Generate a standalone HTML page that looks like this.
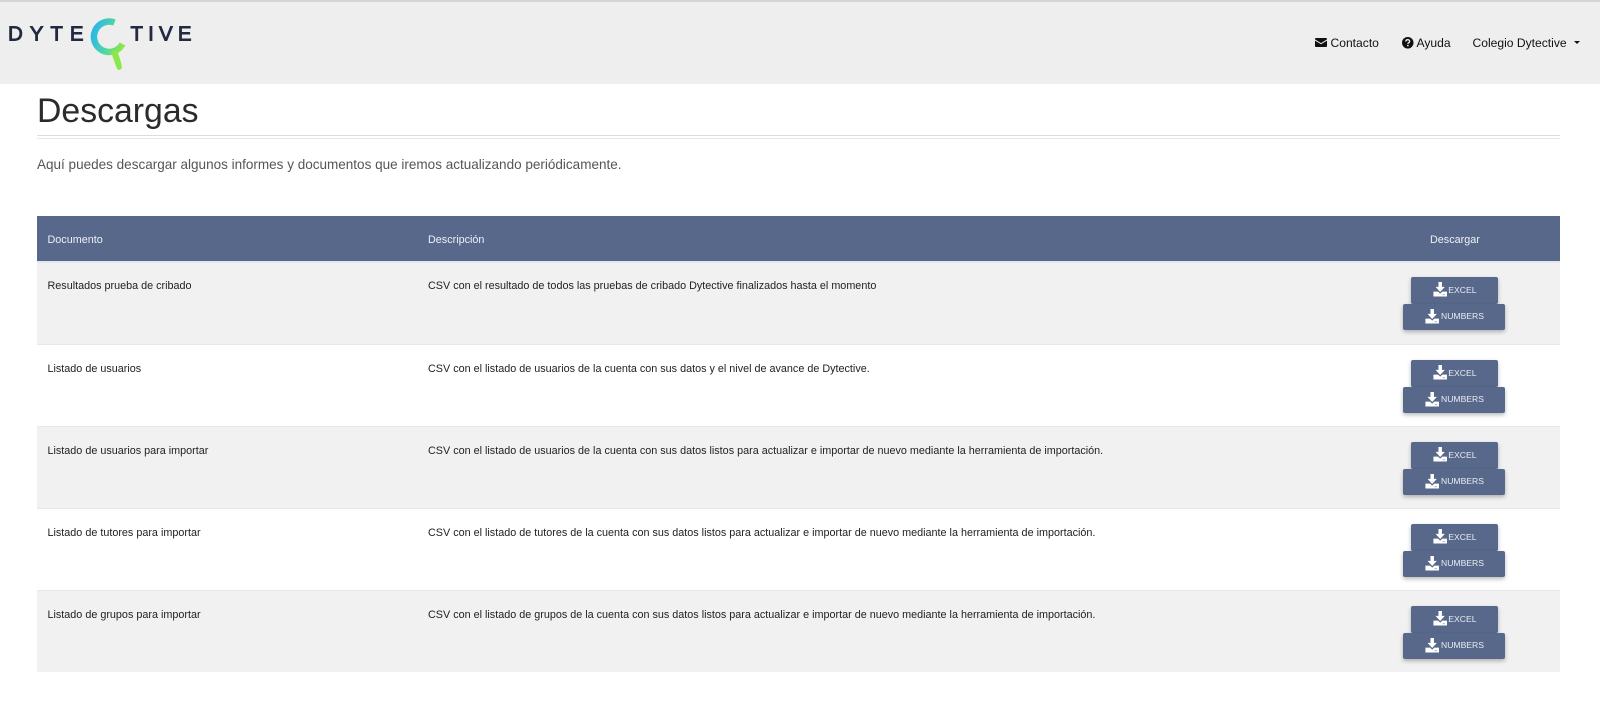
<!DOCTYPE html>
<html lang="es">
<head>
<meta charset="utf-8">
<title>Descargas</title>
<style>
*{box-sizing:border-box}
html,body{margin:0;padding:0;width:1600px;height:712px;overflow:hidden;background:#fff;font-family:"Liberation Sans",sans-serif;color:#212529}
#w{position:absolute;left:0;top:0;width:1600px;height:712px;filter:blur(.35px)}
.a{position:absolute;white-space:nowrap}
#nav{left:0;top:0;width:1600px;height:84px;background:#eee;border-top:2px solid #d4d4d4}
.nl{font-size:12.1px;line-height:16px;top:35px;color:#111}
.row{position:absolute;left:37px;width:1523px;border-top:1px solid #e6e8ec}
.row.g{background:#f1f1f1}
.c{position:absolute;font-size:10.8px;line-height:14px;top:16.500px;white-space:nowrap;color:#222}
.c1{left:10.500px}.c2{left:391px}
.btn{position:absolute;height:27px;background:#58688b;border-radius:2px;box-shadow:0 2px 4px rgba(0,0,0,.28);color:#e9ecf2;font-size:8.6px;line-height:26px;white-space:nowrap}
.btn svg{position:absolute;width:14.400px;height:14.500px}
.btn span{position:absolute;top:0}
.ex{left:1374px;top:16px;width:87px}
.ex svg{left:21.500px;top:5px}.ex span{left:37.300px}
.nu{left:1366px;top:42.500px;width:102px;height:26.500px;line-height:25px}
.nu svg{left:22px;top:5.500px}.nu span{left:38px}
.set{position:absolute;left:37px;width:0;height:0}
</style>
</head>
<body>
<div id="w">
<div id="nav" class="a"></div>
<svg class="a" style="left:0;top:0" width="210" height="80" viewBox="0 0 210 80">
<defs><linearGradient id="lg" gradientUnits="userSpaceOnUse" x1="91" y1="30" x2="125" y2="42"><stop offset="0" stop-color="#27b4ef"/><stop offset=".55" stop-color="#4fd6a4"/><stop offset="1" stop-color="#90e840"/></linearGradient></defs>
<text x="8" y="40.500" font-family="Liberation Sans" font-size="20.500" fill="#232a40" stroke="#232a40" stroke-width=".9" textLength="75.500" lengthAdjust="spacing">DYTE</text>
<text x="130.500" y="40.500" font-family="Liberation Sans" font-size="20.500" fill="#232a40" stroke="#232a40" stroke-width=".9" textLength="61" lengthAdjust="spacing">TIVE</text>
<path d="M114.500 22.500A15.200 15.200 0 1 0 122.500 44" fill="none" stroke="url(#lg)" stroke-width="6.500"/>
<path d="M112 52L116.500 51C118.500 57 121 63 121 67.500A1.800 1.800 0 0 1 117.800 68.500C115.500 63 113.500 57 112 52Z" fill="#8be84a" stroke="#8be84a" stroke-width="1.500"/>
</svg>

<svg class="a" style="left:1315px;top:38px" width="12" height="9" viewBox="0 0 13 11" preserveAspectRatio="none"><path d="M1 0h11a1 1 0 0 1 1 1v.7L6.500 6.300 0 1.700V1a1 1 0 0 1 1-1zM0 3.200l6.500 4.500L13 3.200V10a1 1 0 0 1-1 1H1a1 1 0 0 1-1-1z" fill="#111"/></svg>
<div class="a nl" style="left:1330.500px">Contacto</div>
<svg class="a" style="left:1402px;top:37px" width="11.500" height="11.500" viewBox="0 0 12 12"><circle cx="6" cy="6" r="6" fill="#111"/><path d="M4 4.700C4 2.200 8 2.300 8 4.500C8 6 6.100 5.900 6.100 7.200" fill="none" stroke="#eee" stroke-width="1.400"/><rect x="5.300" y="8.200" width="1.600" height="1.500" fill="#eee"/></svg>
<div class="a nl" style="left:1416.500px">Ayuda</div>
<div class="a nl" style="left:1472.500px">Colegio Dytective</div>
<div class="a" style="left:1574px;top:41px;width:0;height:0;border-left:3px solid transparent;border-right:3px solid transparent;border-top:3px solid #111"></div>

<div class="a" style="left:37px;top:91px;font-size:33.800px;line-height:41px;color:#2b2b2b">Descargas</div>
<div class="a" style="left:37px;top:135px;width:1523px;height:1px;background:#dcdcdc"></div>
<div class="a" style="left:37px;top:138px;width:1523px;height:1px;background:#e8e8e8"></div>
<div class="a" style="left:37px;top:156px;font-size:13.520px;line-height:17px;color:#555">Aquí puedes descargar algunos informes y documentos que iremos actualizando periódicamente.</div>

<div class="a" style="left:37px;top:216px;width:1523px;height:45px;background:#58688b;color:#eef0f5;font-size:10.800px;line-height:14px">
<span class="a" style="left:10.500px;top:17px">Documento</span>
<span class="a" style="left:391px;top:17px">Descripción</span>
<span class="a" style="left:1393px;top:17px">Descargar</span>
</div>

<div style="position:absolute;left:0;top:261px;width:1600px;height:0">
<div class="row g" style="top:0;height:83px;border-top:2px solid #e4e7ed"><div class="c c1" style="top:15.500px">Resultados prueba de cribado</div><div class="c c2" style="top:15.500px">CSV con el resultado de todos las pruebas de cribado Dytective finalizados hasta el momento</div></div>
<div class="row" style="top:83px;height:82px"><div class="c c1">Listado de usuarios</div><div class="c c2">CSV con el listado de usuarios de la cuenta con sus datos y el nivel de avance de Dytective.</div></div>
<div class="row g" style="top:165px;height:82px"><div class="c c1">Listado de usuarios para importar</div><div class="c c2">CSV con el listado de usuarios de la cuenta con sus datos listos para actualizar e importar de nuevo mediante la herramienta de importación.</div></div>
<div class="row" style="top:247px;height:82px"><div class="c c1">Listado de tutores para importar</div><div class="c c2">CSV con el listado de tutores de la cuenta con sus datos listos para actualizar e importar de nuevo mediante la herramienta de importación.</div></div>
<div class="row g" style="top:329px;height:82px"><div class="c c1">Listado de grupos para importar</div><div class="c c2">CSV con el listado de grupos de la cuenta con sus datos listos para actualizar e importar de nuevo mediante la herramienta de importación.</div></div>
</div>

<svg width="0" height="0" style="position:absolute"><defs><symbol id="dl" viewBox="0 0 14 15"><path d="M5.200 0h3.600v5h3L7 10.300 2.200 5h3zM0 10h4.800L7 12l2.200-2H14V15H0z" fill="#fff"/><rect x="9.500" y="12.800" width="2.500" height=".8" fill="#8e9ab3"/></symbol></defs></svg>

<div style="position:absolute;left:0;top:261px;width:1600px;height:0">
<div class="set" style="top:0"><div class="btn ex"><svg><use href="#dl"/></svg><span>EXCEL</span></div><div class="btn nu"><svg><use href="#dl"/></svg><span>NUMBERS</span></div></div>
<div class="set" style="top:83px"><div class="btn ex"><svg><use href="#dl"/></svg><span>EXCEL</span></div><div class="btn nu"><svg><use href="#dl"/></svg><span>NUMBERS</span></div></div>
<div class="set" style="top:165px"><div class="btn ex"><svg><use href="#dl"/></svg><span>EXCEL</span></div><div class="btn nu"><svg><use href="#dl"/></svg><span>NUMBERS</span></div></div>
<div class="set" style="top:247px"><div class="btn ex"><svg><use href="#dl"/></svg><span>EXCEL</span></div><div class="btn nu"><svg><use href="#dl"/></svg><span>NUMBERS</span></div></div>
<div class="set" style="top:329px"><div class="btn ex"><svg><use href="#dl"/></svg><span>EXCEL</span></div><div class="btn nu"><svg><use href="#dl"/></svg><span>NUMBERS</span></div></div>
</div>
</div>
</body>
</html>
